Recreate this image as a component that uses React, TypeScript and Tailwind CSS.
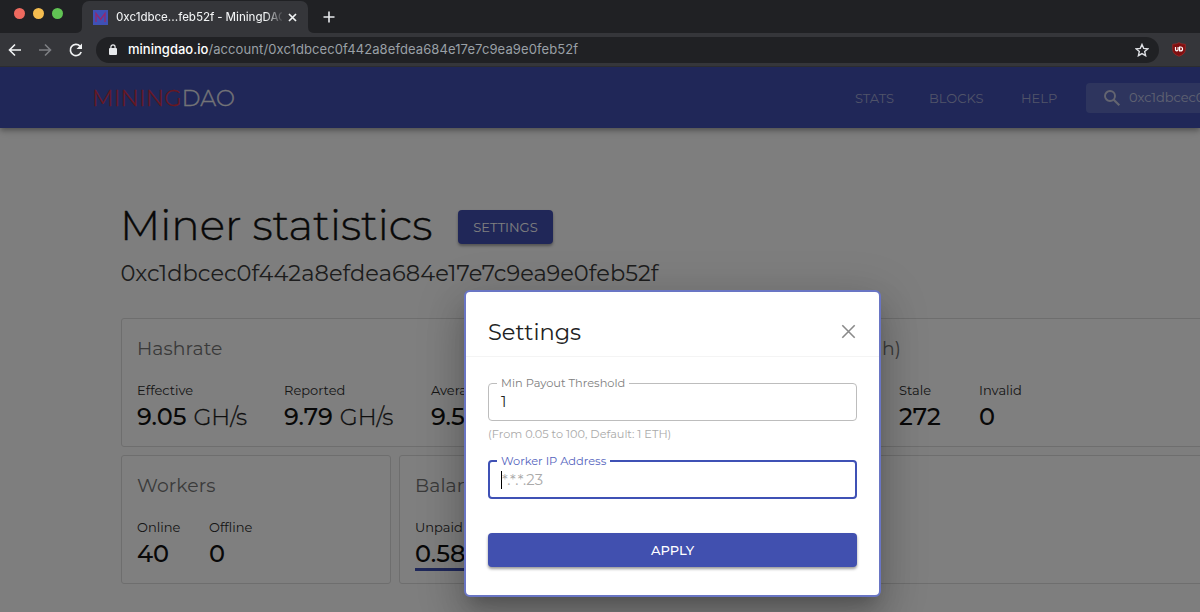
import React from "react";

function Stat({ label, value, unit, className = "", valueClass = "" }: { label: React.ReactNode; value: string; unit?: string; className?: string; valueClass?: string }) {
  return (
    <div className={`shrink-0 ${className}`}>
      <div className="h-5 text-[13px] leading-[19px] text-[#2c2c2c]">{label}</div>
      <div className="mt-[2px] flex h-7 whitespace-nowrap text-[24px] leading-[28px] text-[#111]">
        <span className={`font-medium ${valueClass}`}>{value}</span>
        {unit && <span className="ml-[7px] text-[23.2px] font-light tracking-[-0.05px] text-[#1c1c1c] [-webkit-text-stroke:0.3px]">{unit}</span>}
      </div>
    </div>
  );
}

function Card({ title, titleClass = "", className = "", children }: { title: string; titleClass?: string; className?: string; children: React.ReactNode }) {
  return (
    <section className={`h-[129px] shrink-0 rounded-[3px] border border-[#dcdcdc] bg-white pl-[15px] pt-[17px] ${className}`}>
      <h3 className={`h-6 whitespace-nowrap text-[18.8px] leading-[26px] tracking-[0.1px] text-[#757575] ${titleClass}`}>{title}</h3>
      <div className="mt-[21px] flex">{children}</div>
    </section>
  );
}

function BrowserChrome() {
  return (
    <div className="font-['Inter',sans-serif]">
      <div className="flex h-[33px] bg-[#202124]">
        <div className="flex w-[75px] gap-[8px] pl-[14px] pt-[8px]">
          <span className="size-[11px] rounded-full bg-[#ee6a5f]" />
          <span className="size-[11px] rounded-full bg-[#f5bd4f]" />
          <span className="size-[11px] rounded-full bg-[#61c454]" />
        </div>
        <svg className="mt-[27px] h-[6px] w-[7px]" viewBox="0 0 7 6"><path d="M7 0v6H0Q7 6 7 0" fill="#35363a" /></svg>
        <div className="mt-[1px] flex h-8 w-[226px] items-center rounded-t-[7px] bg-[#35363a] pl-[11px]">
          <svg className="size-[15px]" viewBox="0 0 15 15">
            <rect width="15" height="15" fill="#3f51b5" />
            <path d="M3 12V3.5L7.5 9.5L12 3.5V12" fill="none" stroke="#93286e" strokeWidth="1.3" />
          </svg>
          <span className="ml-[8px] w-[166px] overflow-hidden whitespace-nowrap bg-linear-to-r from-[#f1f3f4] from-90% to-[#4a4b4f] bg-clip-text pt-[2px] text-[11.5px] font-medium tracking-[-0.05px] text-transparent">0xc1dbce...feb52f - MiningDAO</span>
          <svg className="ml-[6px] size-[9px]" viewBox="0 0 9 9"><path d="M1 1l7 7M8 1l-7 7" stroke="#f1f3f4" strokeWidth="1.7" /></svg>
        </div>
        <svg className="mt-[27px] h-[6px] w-[7px]" viewBox="0 0 7 6"><path d="M0 0v6h7Q0 6 0 0" fill="#35363a" /></svg>
        <svg className="ml-[8px] mt-[11px] size-[12px]" viewBox="0 0 12 12"><path d="M6 .5v11M.5 6h11" stroke="#e8eaed" strokeWidth="1.6" /></svg>
      </div>
      <div className="flex h-[34px] items-center border-b border-[#2c2d30] bg-[#35363a] pl-[7px]">
        <svg className="size-4" viewBox="0 0 16 16"><path d="M14 8H2.8M8 2.5L2.5 8L8 13.5" fill="none" stroke="#f1f3f4" strokeWidth="1.6" /></svg>
        <svg className="ml-[14px] size-4" viewBox="0 0 16 16"><path d="M2 8h11.2M8 2.5L13.500 8L8 13.500" fill="none" stroke="#7d7f83" strokeWidth="1.6" /></svg>
        <svg className="ml-[15px] size-4" viewBox="0 0 16 16"><path d="M13.200 10A5.600 5.600 0 1 1 12 4.100" fill="none" stroke="#f1f3f4" strokeWidth="1.700" /><path d="M14 1.500V7H8.500z" fill="#f1f3f4" /></svg>
        <div className="ml-[12px] flex h-[26px] w-[1063px] items-center rounded-full bg-[#202124] pl-[13px]">
          <svg className="h-[11px] w-2" viewBox="0 0 8 11"><rect y="4" width="8" height="7" rx="1" fill="#e8eaed" /><path d="M1.900 4.500V2.900a2.100 2.100 0 0 1 4.200 0v1.600" fill="none" stroke="#e8eaed" strokeWidth="1.200" /></svg>
          <span className="ml-[11px] whitespace-nowrap pt-px text-[13px] tracking-[0.1px] text-[#9aa0a6]"><span className="font-medium tracking-[0.02px] text-white">miningdao.io</span>/account/0xc1dbcec0f442a8efdea684e17e7c9ea9e0feb52f</span>
          <svg className="ml-auto mr-[10px] size-[14px]" viewBox="0 0 14 14"><path d="M7 1.500l1.700 3.900 4.100.4-3.100 2.800.9 4.100L7 10.600l-3.600 2.100.9-4.100L1.200 5.800l4.100-.4z" fill="none" stroke="#dfe1e5" strokeWidth="1.400" /></svg>
        </div>
        <svg className="ml-[13px] h-[15px] w-[14px]" viewBox="0 0 14 15">
          <path d="M7 .7Q9.500 2.200 13.300 2.300V7.500Q13.300 12 7 14.300Q.7 12 .7 7.500V2.300Q4.500 2.200 7 .7z" fill="#800f10" stroke="#a32a2a" strokeWidth=".7" />
          <path d="M3.500 5v2.500a1.300 1.300 0 0 0 2.600 0V5M7.600 5v3.900h1a1.900 1.900 0 0 0 0-3.900z" fill="none" stroke="#fff" strokeWidth="1.200" />
        </svg>
      </div>
    </div>
  );
}

function Field({ label, focused, children }: { label: string; focused?: boolean; children: React.ReactNode }) {
  return (
    <div className={`relative flex items-center rounded-[4px] ${focused ? "h-[39px] border-2 border-[#3f51b5] pl-[11px]" : "h-[38px] border border-[#bdbdbd] pl-[12px]"}`}>
      <label className={`absolute top-[-8px] bg-white px-1 text-[11.4px] leading-[14px] whitespace-nowrap ${focused ? "left-[7px] text-[#5463bd]" : "left-[8px] text-[#808080]"}`}>{label}</label>
      {children}
    </div>
  );
}

export default function App() {
  return (
    <div className="h-[612px] w-[1200px] overflow-hidden font-['Montserrat','Inter',sans-serif]">
      <BrowserChrome />
      <div className="relative h-[545px] overflow-hidden bg-[#fcfcfc]">
        <header className="flex h-[61px] items-center bg-[#404eb0] pl-[92px] shadow-[0_2px_4px_-1px_rgba(0,0,0,.2),0_4px_5px_rgba(0,0,0,.14),0_1px_10px_rgba(0,0,0,.12)]">
          <div className="w-[763px] shrink-0 whitespace-nowrap pt-[2px] text-[22.5px] font-light tracking-[0.15px] text-[#e8e8ee] [-webkit-text-stroke:0.3px]"><span className="text-[#d32f3f]">MINING</span>DAO</div>
          <nav className="flex shrink-0 pt-[2px] text-[13px] text-[#a0a7d2]">
            <a className="w-[74px]">STATS</a>
            <a className="w-[92px]">BLOCKS</a>
            <a className="w-[65px]">HELP</a>
          </nav>
          <div className="flex h-[30px] w-[150px] shrink-0 items-center rounded-[4px] bg-[#5c6bbc] pl-[17px]">
            <svg className="size-[18px] shrink-0" viewBox="0 0 18 18"><circle cx="7" cy="7" r="5" fill="none" stroke="#c8cbe0" strokeWidth="1.900" /><path d="M10.500 10.500l5.800 5.800" stroke="#c8cbe0" strokeWidth="2.100" /></svg>
            <span className="ml-[8px] text-[13px] text-[#c0c5e3]">0xc1dbcec0f442a8efdea684e17e7c9ea9e0feb52f</span>
          </div>
        </header>

        <main className="w-[1500px] pl-[121px] pt-[78px]">
          <div className="flex h-10 items-center">
            <h1 className="-ml-px h-10 w-[338px] whitespace-nowrap text-[42.2px] font-light leading-[38px] text-[#111] [-webkit-text-stroke:0.4px]">Miner statistics</h1>
            <button className="mt-[2px] h-[34px] w-[95px] rounded-[4px] bg-[#404eb0] pt-px text-[13px] text-white shadow-[0_2px_3px_rgba(0,0,0,.35)]">SETTINGS</button>
          </div>
          <h2 className="-ml-[0.5px] mt-3 h-7 whitespace-nowrap text-[22.5px] leading-[30px] tracking-[0.05px] text-[#3a3a3a]">0xc1dbcec0f442a8efdea684e17e7c9ea9e0feb52f</h2>

          <div className="mt-8 flex gap-2">
            <Card title="Hashrate" className="w-[604px]">
              <Stat label="Effective" value="9.05" unit="GH/s" className="w-[147px]" />
              <Stat label="Reported" value="9.79" unit="GH/s" className="w-[147px]" />
              <Stat label="Average" value="9.51" unit="GH/s" className="w-[147px]" />
            </Card>
            <Card title="Shares (1h)" titleClass="w-[152px] text-right" className="w-[604px]">
              <Stat label="Valid" value="8142" className="w-[150px]" />
              <Stat label="Stale" value="272" className="w-[80px]" />
              <Stat label="Invalid" value="0" />
            </Card>
          </div>
          <div className="mt-2 flex gap-2">
            <Card title="Workers" className="w-[270px]">
              <Stat label="Online" value="40" className="w-[72px]" />
              <Stat label="Offline" value="0" />
            </Card>
            <Card title="Balance" className="w-[938px]">
              <Stat label="Unpaid" value="0.58" valueClass="h-[31px] shrink-0 border-b-[3px] border-[#3f51b5]" />
            </Card>
          </div>
        </main>

        <div className="absolute inset-0 bg-black/50" />

        <div role="dialog" className="absolute left-[464px] top-[223px] h-[307px] w-[417px] rounded-[6px] border-2 border-[#6975c4] bg-white shadow-[0_11px_15px_-7px_rgba(0,0,0,.2),0_24px_38px_3px_rgba(0,0,0,.14),0_9px_46px_8px_rgba(0,0,0,.12)]">
          <div className="flex h-[65px] items-center justify-between border-b border-[#f4f4f4] pl-[22px] pr-[23px] pt-[15px]">
            <h2 className="text-[22.5px] leading-7 text-[#222]">Settings</h2>
            <svg className="size-[15px]" viewBox="0 0 15 15"><path d="M1.300 1.300l12.400 12.400M13.700 1.300L1.300 13.700" stroke="#8a8a8a" strokeWidth="1.600" /></svg>
          </div>
          <div className="px-[22px] pt-[26px]">
            <Field label="Min Payout Threshold"><span className="text-[15px] leading-4 text-[#222]">1</span></Field>
            <p className="mt-[5px] h-[16px] text-[11.3px] leading-4 text-[#aaa]">(From 0.05 to 100, Default: 1 ETH)</p>
            <div className="mt-[18px]">
              <Field label="Worker IP Address" focused><span className="flex h-[18px] items-center border-l border-black text-[14.8px] leading-4 text-[#aaa]">*.*.*.23</span></Field>
            </div>
            <button className="mt-[34px] h-[34px] w-full rounded-[4px] bg-[#4150af] pt-px text-[13px] font-medium text-white shadow-[0_2px_3px_rgba(0,0,0,.4)]">APPLY</button>
          </div>
        </div>
      </div>
    </div>
  );
}
